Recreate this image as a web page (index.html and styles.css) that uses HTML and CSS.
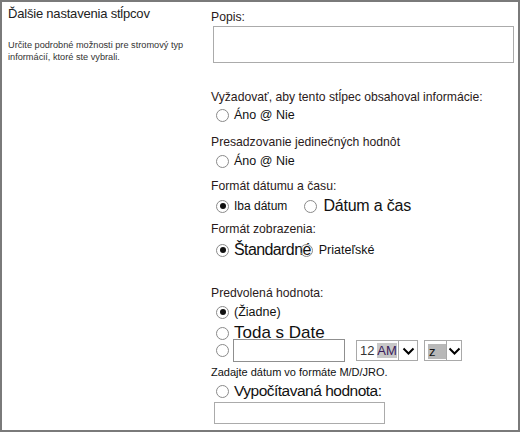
FILE: index.html
```html
<!DOCTYPE html>
<html>
<head>
<meta charset="utf-8">
<link rel="stylesheet" href="styles.css">
</head>
<body>
<div class="frame">
  <div class="left">
    <div class="title">Ďalšie nastavenia stĺpcov</div>
    <div class="desc">Určite podrobné možnosti pre stromový typ informácií, ktoré ste vybrali.</div>
  </div>
  <div class="right">
    <div class="label l-popis">Popis:</div>
    <div class="textarea"></div>

    <div class="label l-req">Vyžadovať, aby tento stĺpec obsahoval informácie:</div>
    <div class="row r-req"><span class="radio"></span><span class="opt">Áno @ Nie</span></div>

    <div class="label l-uniq">Presadzovanie jedinečných hodnôt</div>
    <div class="row r-uniq"><span class="radio"></span><span class="opt">Áno @ Nie</span></div>

    <div class="label l-fmt">Formát dátumu a času:</div>
    <div class="row r-fmt">
      <span class="radio on"></span><span class="opt small">Iba dátum</span>
      <span class="radio gap"></span><span class="opt big dt">Dátum a čas</span>
    </div>

    <div class="label l-disp">Formát zobrazenia:</div>
    <div class="row r-disp">
      <span class="radio on"></span><span class="opt big std">Štandardné</span><span class="radio overlap"></span><span class="opt tiny">Priateľské</span>
    </div>

    <div class="label l-def">Predvolená hodnota:</div>
    <div class="row r-none"><span class="radio on"></span><span class="opt">(Žiadne)</span></div>
    <div class="row r-today"><span class="radio"></span><span class="opt big">Toda s Date</span></div>
    <div class="row r-date">
      <span class="radio"></span>
      <span class="datebox"></span>
      <span class="select s-hour"><span class="sel-text">12 <span class="hl">AM</span></span><span class="sel-btn"><svg width="13" height="8" viewBox="0 0 13 8"><path d="M1.5 1.5 L6.5 6.5 L11.5 1.5" fill="none" stroke="#000" stroke-width="2"/></svg></span></span>
      <span class="select s-min"><span class="sel-text"><span class="hl2">z</span></span><span class="sel-btn"><svg width="13" height="8" viewBox="0 0 13 8"><path d="M1.5 1.5 L6.5 6.5 L11.5 1.5" fill="none" stroke="#000" stroke-width="2"/></svg></span></span>
    </div>
    <div class="hint">Zadajte dátum vo formáte M/D/JRO.</div>
    <div class="row r-calc"><span class="radio"></span><span class="opt big calc">Vypočítavaná hodnota:</span></div>
    <div class="calcbox"></div>
  </div>
</div>
</body>
</html>
```

FILE: styles.css
```css
html, body {
  margin: 0;
  padding: 0;
  background: #fff;
}
.frame {
  box-sizing: border-box;
  width: 520px;
  height: 432px;
  border: 2px solid #7a7a7a;
  display: flex;
  font-family: "Liberation Sans", Arial, sans-serif;
  color: #222;
}
.left {
  width: 203px;
  padding-left: 6px;
  box-sizing: border-box;
}
.title {
  margin-top: 4px;
  font-size: 13px;
  line-height: 16px;
  color: #222;
  letter-spacing: -0.2px;
}
.desc {
  margin-top: 17px;
  font-size: 9.2px;
  line-height: 12px;
  color: #333;
  width: 190px;
}
.right {
  flex: 1;
  padding-left: 6px;
  box-sizing: border-box;
}
.label {
  font-size: 12.2px;
  line-height: 16px;
  color: #2a1a1a;
}
.l-popis { margin-top: 7px; }
.textarea {
  margin-top: 1px;
  margin-left: 2px;
  width: 301px;
  height: 37px;
  box-sizing: border-box;
  border: 1px solid #ababab;
}
.l-req { margin-top: 26px; }
.row {
  display: flex;
  align-items: center;
  height: 20px;
}
.radio {
  box-sizing: border-box;
  width: 13px;
  height: 13px;
  border: 1px solid #8a8a8a;
  border-radius: 50%;
  margin-left: 5px;
  margin-right: 5px;
  flex: none;
  background: #fff;
  position: relative;
}
.radio.on::after {
  content: "";
  position: absolute;
  left: 2.5px;
  top: 2.5px;
  width: 6px;
  height: 6px;
  border-radius: 50%;
  background: #111;
}
.opt {
  font-size: 12.5px;
  color: #111;
}
.opt.small { font-size: 12px; }
.opt.big { font-size: 17px; }
.opt.dt { font-size: 16px; letter-spacing: -0.2px; }
.opt.std { font-size: 16px; letter-spacing: -0.6px; }
.opt.calc { font-size: 15.5px; letter-spacing: -0.5px; }
.opt.tiny { font-size: 12.5px; margin-left: 6px; }
.radio.gap { margin-left: 17px; margin-right: 6px; }
.radio.overlap { margin-left: -11px; margin-right: 0; background: transparent; }
.r-req { margin-top: 0; }
.l-uniq { margin-top: 9px; }
.r-uniq { margin-top: 1px; }
.l-fmt { margin-top: 7px; }
.r-fmt { margin-top: 2px; }
.l-disp { margin-top: 5px; }
.r-disp { margin-top: 3px; }
.l-def { margin-top: 25px; }
.r-none { margin-top: 1px; }
.r-today { margin-top: 1px; }
.r-date { height: 23px; margin-top: -4px; }
.datebox {
  box-sizing: border-box;
  width: 112px;
  height: 23px;
  border: 1px solid #8f8f8f;
  margin-left: -1px;
}
.select {
  display: flex;
  height: 21px;
  box-sizing: border-box;
  border: 1px solid #a9a9a9;
  align-items: center;
}
.s-hour { margin-left: 11px; width: 62px; }
.s-min { margin-left: 6px; width: 38px; }
.sel-text {
  flex: 1;
  font-size: 13px;
  color: #333;
  padding-left: 3px;
  height: 19px;
  line-height: 19px;
}
.hl {
  background: #c8c8c8;
  color: #3a1a5a;
}
.hl2 {
  background: #b8b8b8;
  color: #111;
  display: inline-block;
  width: 17px;
  line-height: 15px;
  padding-left: 1px;
  margin-top: 3px;
}
.sel-btn {
  box-sizing: border-box;
  width: 19px;
  height: 19px;
  border-left: 1px solid #a9a9a9;
  display: flex;
  align-items: center;
  justify-content: center;
  background: #fff;
}
.hint {
  margin-top: 3px;
  font-size: 11px;
  line-height: 14px;
  color: #111;
}
.r-calc { margin-top: 2px; }
.calcbox {
  margin-top: 1px;
  margin-left: 3px;
  width: 171px;
  height: 22px;
  box-sizing: border-box;
  border: 1px solid #ababab;
}
```
